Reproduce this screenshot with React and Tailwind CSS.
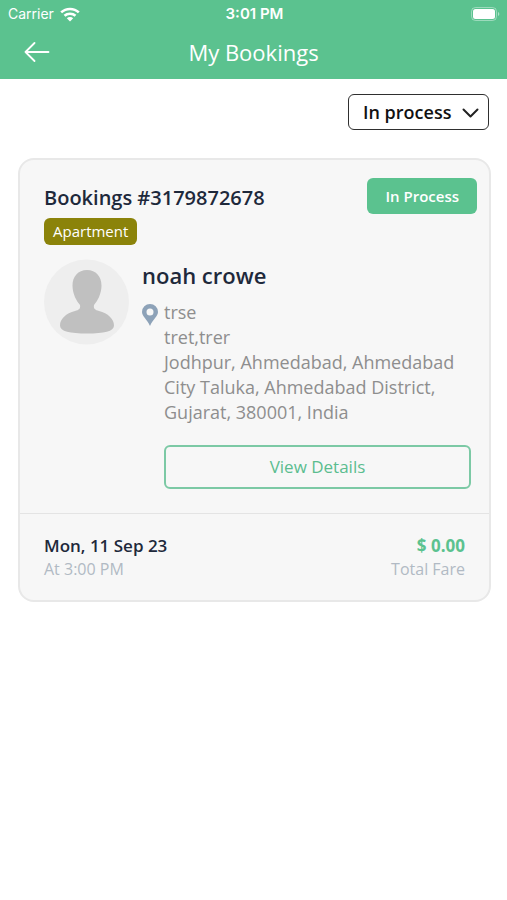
import React, { useState } from "react";

const bookings = [
    {
        id: "3179872678",
        type: "Apartment",
        status: "In Process",
        customer: "noah crowe",
        address: ["trse", "tret,trer", "Jodhpur, Ahmedabad, Ahmedabad City Taluka, Ahmedabad District, Gujarat, 380001, India"],
        date: "Mon, 11 Sep 23",
        time: "At 3:00 PM",
        fare: "$ 0.00",
    },
];

const filters = ["In process", "Completed", "Cancelled"];

const WifiIcon = () => (
    <svg width="20" height="15" viewBox="0 0 20 15" fill="none" stroke="white" strokeWidth="2.6" aria-hidden="true">
        <path d="M1.2 5.4C6 .8 14 .8 18.8 5.4" />
        <path d="M4.5 8.8C7.5 6 12.5 6 15.5 8.8" />
        <path d="M6.8 11.2C8.5 9.6 11.5 9.6 13.2 11.2L10 14.4Z" fill="white" stroke="none" />
    </svg>
);

const BatteryIcon = () => (
    <svg width="30" height="15" viewBox="0 0 30 15" aria-hidden="true">
        <rect x="0.5" y="0.5" width="25" height="13" rx="4" fill="none" stroke="white" strokeOpacity="0.4" />
        <rect x="2" y="2" width="22" height="10" rx="2.5" fill="white" />
        <path d="M27 5C28.8 5.7 28.8 8.3 27 9Z" fill="white" fillOpacity="0.5" />
    </svg>
);

const BackIcon = () => (
    <svg width="26" height="20" viewBox="0 0 26 20" fill="none" stroke="white" strokeWidth="1.8" strokeLinecap="round" strokeLinejoin="round" aria-hidden="true">
        <path d="M24.5 10H1.5M10.5 1L1.5 10L10.5 19" />
    </svg>
);

const Avatar = () => (
    <svg className="shrink-0" width="86" height="86" viewBox="0 0 86 86" role="img" aria-label="Customer">
        <circle cx="42.5" cy="43" r="42.5" fill="#eeeeee" />
        <path
            d="M43 11C52 11 57.5 17.5 57.5 26.5C57.5 35 53.5 42 50 46C49.3 49.5 51 51 55 52C64 54.2 70 60 70 66.5C70 72.5 60 74.5 43 74.5C26 74.5 16 72.5 16 66.5C16 60 22 54.2 31 52C35 51 36.7 49.5 36 46C32.5 42 28.5 35 28.5 26.5C28.5 17.5 34 11 43 11Z"
            fill="#c0c0c0"
        />
    </svg>
);

const PinIcon = () => (
    <svg className="mt-1 shrink-0" width="16" height="22" viewBox="0 0 16 22" aria-hidden="true">
        <path fillRule="evenodd" d="M8 0A8 8 0 0 1 16 8C16 12.5 11 15 8 22C5 15 0 12.5 0 8A8 8 0 0 1 8 0ZM8 4.5A3.5 3.5 0 1 0 8 11.5A3.5 3.5 0 1 0 8 4.5Z" fill="#8da2b8" />
    </svg>
);

const BookingCard = ({ booking }) => (
    <article className="rounded-2xl border-2 border-[#e8e8e8] bg-[#f7f7f7]">
        <div className="pt-[18px] pb-6 pl-6 pr-3">
            <div className="flex items-start justify-between">
                <h2 className="mt-2 text-xl leading-6 font-semibold text-[#1e293b]">Bookings #{booking.id}</h2>
                <span className="rounded-md bg-[#5bc28f] px-[18px] py-2 text-[15px] leading-5 font-semibold text-white">
                    {booking.status}
                </span>
            </div>
            <span className="mt-1 block w-fit rounded-md bg-[#8b830a] px-[9px] py-0.5 text-[15px] leading-[23px] text-white">
                {booking.type}
            </span>

            <div className="mt-3.5 mr-1.5 flex gap-3">
                <Avatar />
                <div className="min-w-0 flex-1">
                    <h3 className="text-[22px] leading-8 font-semibold text-[#1e293b]">{booking.customer}</h3>
                    <div className="mt-[9px] flex gap-1.5">
                        <PinIcon />
                        <address className="min-w-0 flex-1 text-lg leading-[25px] text-[#8e8e8e] not-italic">
                            {booking.address.map((line) => (
                                <p key={line}>{line}</p>
                            ))}
                        </address>
                    </div>
                    <div className="mt-5 pl-[22px]">
                        <button className="h-11 w-full rounded-md border-2 border-[#7cc9a5] text-[17px] font-medium text-[#5bbd8f]">
                            View Details
                        </button>
                    </div>
                </div>
            </div>
        </div>

        {/* Date and fare */}
        <div className="flex justify-between border-t border-[#e4e4e4] px-6 py-5">
            <div>
                <p className="text-[17px] leading-6 font-semibold text-[#1e293b]">{booking.date}</p>
                <p className="text-base leading-[22px] text-[#b1bac4]">{booking.time}</p>
            </div>
            <div className="text-right">
                <p className="text-[17px] leading-6 font-bold text-[#5bc28f]">{booking.fare}</p>
                <p className="text-base leading-[22px] text-[#b1bac4]">Total Fare</p>
            </div>
        </div>
    </article>
);

const App = () => {
    const [filter, setFilter] = useState(filters[0]);

    return (
        <div className="min-h-screen bg-white font-['Open_Sans',sans-serif]">
            <header className="bg-[#5bc28f] pb-1 text-white">
                {/* Status bar */}
                <div className="grid h-7 grid-cols-3 items-center pl-2 pr-1.5 font-['Inter',sans-serif] text-sm">
                    <div className="flex items-center gap-1.5">
                        <span>Carrier</span>
                        <WifiIcon />
                    </div>
                    <span className="text-center text-[15px] font-semibold">3:01 PM</span>
                    <div className="flex justify-end">
                        <BatteryIcon />
                    </div>
                </div>
                <div className="grid h-[47px] grid-cols-[1fr_auto_1fr] items-center px-6">
                    <button className="justify-self-start" aria-label="Back">
                        <BackIcon />
                    </button>
                    <h1 className="text-[22px] leading-8">My Bookings</h1>
                </div>
            </header>

            <main className="pt-[15px] pr-4 pl-[18px]">
                <div className="mr-0.5 flex justify-end">
                    <div className="relative">
                        <select
                            aria-label="Booking status"
                            value={filter}
                            onChange={(e) => setFilter(e.target.value)}
                            className="block h-9 w-[141px] appearance-none rounded-md border border-[#2f2f2f] bg-white pl-3.5 text-lg leading-6 font-semibold text-[#111111]"
                        >
                            {filters.map((name) => (
                                <option key={name}>{name}</option>
                            ))}
                        </select>
                        <svg className="pointer-events-none absolute top-3.5 right-2.5" width="17" height="10" viewBox="0 0 17 10" fill="none" stroke="#222222" strokeWidth="2" strokeLinecap="round" strokeLinejoin="round" aria-hidden="true">
                            <path d="M1.5 1.5L8.5 8.5L15.5 1.5" />
                        </svg>
                    </div>
                </div>

                <section className="mt-7 flex flex-col gap-5">
                    {bookings.map((booking) => (
                        <BookingCard key={booking.id} booking={booking} />
                    ))}
                </section>
            </main>
        </div>
    );
};

export default App;
